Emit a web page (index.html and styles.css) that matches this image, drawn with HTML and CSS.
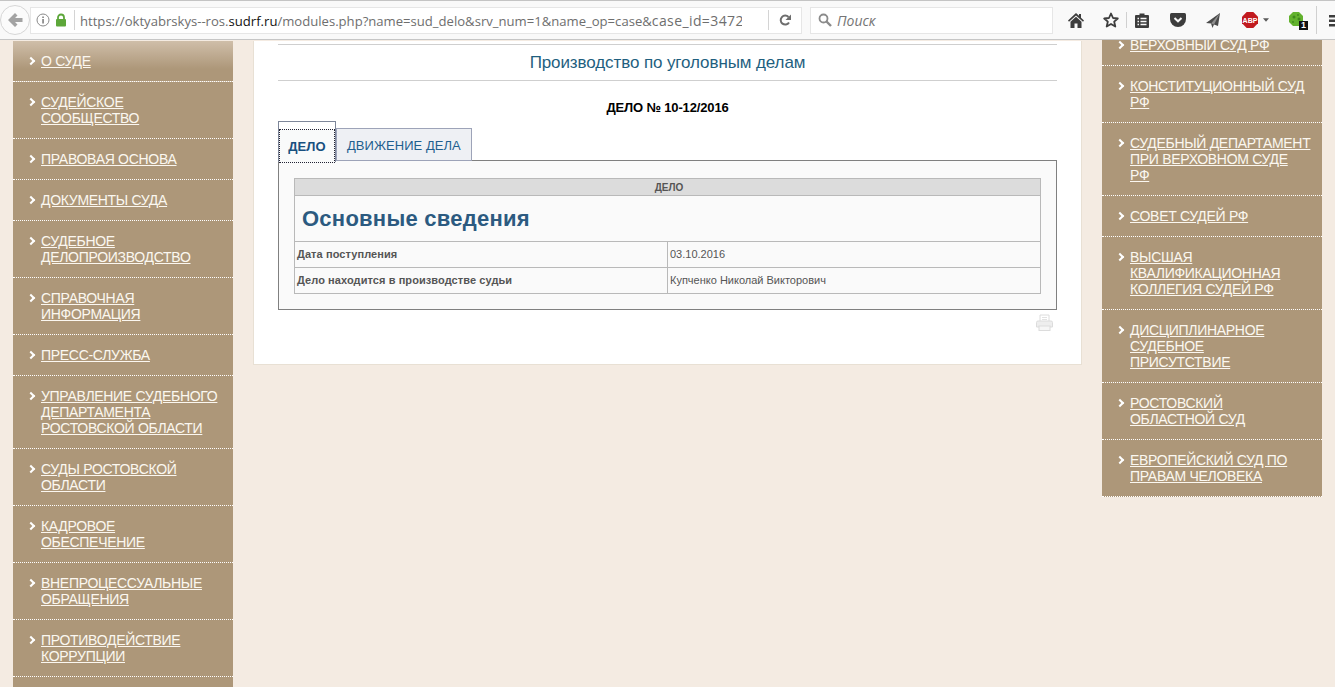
FILE: index.html
```html
<!DOCTYPE html>
<html>
<head>
    <meta charset="utf-8">
    <title>Производство по уголовным делам</title>
    <link rel="stylesheet" href="styles.css">
</head>
<body>
    <div class="toolbar">
        <div class="backBtn">
            <svg width="16" height="16" viewBox="0 0 16 16"><path d="M8 1 1 8 8 15 10.500 12.500 8 10H15.500V6H8L10.500 3.500Z" fill="#a3a3a3"/></svg>
        </div>
        <div class="urlBar">
            <svg class="infoIcon" width="14" height="14" viewBox="0 0 14 14"><circle cx="7" cy="7" r="6" fill="none" stroke="#8a8a8a" stroke-width="1"/><rect x="6.300" y="6" width="1.500" height="4.500" fill="#777"/><rect x="6.300" y="3.500" width="1.500" height="1.500" fill="#777"/></svg>
            <svg class="lockIcon" width="12" height="14" viewBox="0 0 12 14"><path d="M3 6V4.500a3 3 0 0 1 6 0V6" fill="none" stroke="#5da73a" stroke-width="1.800"/><rect x="1" y="6" width="10" height="7.500" rx="1" fill="#5da73a"/></svg>
            <span class="urlSep"></span>
            <div class="url">https://oktyabrskys--ros.<b>sudrf.ru</b>/modules.php?name=sud_delo&amp;srv_num=1&amp;name_op=case&amp;<span class="urlEnd">case_id=3472</span></div>
            <span class="urlSep reloadSep"></span>
            <svg class="reloadIcon" width="14" height="14" viewBox="0 0 14 14"><path d="M11 9.500A4.500 4.500 0 1 1 10.500 4" fill="none" stroke="#6d6d6d" stroke-width="2"/><path d="M13 1.500V7H7.500Z" fill="#6d6d6d"/></svg>
        </div>
        <div class="searchBar">
            <svg width="14" height="14" viewBox="0 0 14 14"><circle cx="5.500" cy="5.500" r="4" fill="none" stroke="#8b8b8b" stroke-width="1.800"/><path d="M8.500 8.500 13 13" stroke="#8b8b8b" stroke-width="2.400"/></svg>
            <span>Поиск</span>
        </div>
        <div class="tools">
            <svg class="homeIcon" width="16" height="15" viewBox="0 0 16 15"><path d="M8 0 0 7.500 1 8.700 8 2.400 15 8.700 16 7.500 13 4.700V1H11V2.800ZM8 3.800 2.500 8.800V15H6.500V10.500H9.500V15H13.500V8.800Z" fill="#3d3d3d"/></svg>
            <svg class="starIcon" width="16" height="16" viewBox="0 0 16 16"><path d="M8 1.500 10 6 14.800 6.500 11.200 9.700 12.300 14.500 8 12 3.700 14.500 4.800 9.700 1.200 6.500 6 6Z" fill="none" stroke="#3d3d3d" stroke-width="1.800" stroke-linejoin="round"/></svg>
            <span class="toolSep"></span>
            <svg class="listIcon" width="14" height="16" viewBox="0 0 14 16"><path d="M1 3H4.500V1.500H9.500V3H13Q14 3 14 4V15Q14 16 13 16H1Q0 16 0 15V4Q0 3 1 3Z" fill="#3d3d3d"/><path d="M2.500 6.500H4M5.500 6.500H11.500M2.500 9.500H4M5.500 9.500H11.500M2.500 12.500H4M5.500 12.500H11.500" stroke="#f9f9f9" stroke-width="1.300"/></svg>
            <svg class="pocketIcon" width="16" height="14" viewBox="0 0 16 14"><path d="M1.500 0H14.500Q16 0 16 1.500V6A8 8 0 0 1 0 6V1.500Q0 0 1.500 0Z" fill="#3d3d3d"/><path d="M4.500 5 8 8.300 11.500 5" fill="none" stroke="#f9f9f9" stroke-width="2"/></svg>
            <svg class="planeIcon" width="14" height="15" viewBox="0 0 14 15"><path d="M14 0 0 10 5 10.500 6.500 15 8 11.500 12 13Z" fill="#4a4a4a"/><path d="M14 0 5 10.500 8 11.500Z" fill="#8f8f8f"/></svg>
            <svg class="abpIcon" width="16" height="16" viewBox="0 0 16 16"><path d="M4.700 0H11.300L16 4.700V11.300L11.300 16H4.700L0 11.300V4.700Z" fill="#c11a1f"/><text x="8" y="10.500" text-anchor="middle" class="abpText">ABP</text></svg>
            <svg class="caretIcon" width="6" height="4" viewBox="0 0 7 4"><path d="M0 0H7L3.500 4Z" fill="#5a5a5a"/></svg>
            <div class="ext">
                <svg width="14" height="16" viewBox="0 0 14 16"><path d="M4 1H10L14 5V11L10 15H4L0 11V5Z" fill="#63b22e"/><circle cx="5" cy="6" r="1.500" fill="#3f8a1c"/><circle cx="9" cy="4" r="1" fill="#3f8a1c"/><circle cx="10" cy="8" r="1.500" fill="#3f8a1c"/><circle cx="4" cy="11" r="1" fill="#3f8a1c"/></svg>
                <span class="extBadge">1</span>
            </div>
            <span class="toolSep lastSep"></span>
            <svg class="menuIcon" width="13" height="13" viewBox="0 0 13 13"><path d="M0 1H13V3.500H0ZM0 5.500H13V8H0ZM0 10H13V12.500H0Z" fill="#3d3d3d"/></svg>
        </div>
    </div>

    <div class="page">
        <ul class="sideMenu leftMenu">
            <li class="first"><a href="#">О СУДЕ</a></li>
            <li><a href="#">СУДЕЙСКОЕ СООБЩЕСТВО</a></li>
            <li><a href="#">ПРАВОВАЯ ОСНОВА</a></li>
            <li><a href="#">ДОКУМЕНТЫ СУДА</a></li>
            <li><a href="#">СУДЕБНОЕ ДЕЛОПРОИЗВОДСТВО</a></li>
            <li><a href="#">СПРАВОЧНАЯ ИНФОРМАЦИЯ</a></li>
            <li><a href="#">ПРЕСС-СЛУЖБА</a></li>
            <li><a href="#">УПРАВЛЕНИЕ СУДЕБНОГО ДЕПАРТАМЕНТА РОСТОВСКОЙ ОБЛАСТИ</a></li>
            <li><a href="#">СУДЫ РОСТОВСКОЙ ОБЛАСТИ</a></li>
            <li><a href="#">КАДРОВОЕ<br>ОБЕСПЕЧЕНИЕ</a></li>
            <li><a href="#">ВНЕПРОЦЕССУАЛЬНЫЕ ОБРАЩЕНИЯ</a></li>
            <li><a href="#">ПРОТИВОДЕЙСТВИЕ КОРРУПЦИИ</a></li>
            <li class="empty"></li>
        </ul>

        <div class="card">
            <h2 class="caseTitle">Производство по уголовным делам</h2>
            <h3 class="caseNum">ДЕЛО № 10-12/2016</h3>

            <div class="tabs">
                <div class="tab active"><a href="#">ДЕЛО</a></div>
                <div class="tab"><a href="#">ДВИЖЕНИЕ ДЕЛА</a></div>
            </div>
            <div class="panel">
                <table class="caseTable">
                    <tr><th colspan="2" class="tableHead">ДЕЛО</th></tr>
                    <tr><td colspan="2" class="bigCell">Основные сведения</td></tr>
                    <tr>
                        <td class="label">Дата поступления</td>
                        <td class="value">03.10.2016</td>
                    </tr>
                    <tr>
                        <td class="label">Дело находится в производстве судьи</td>
                        <td class="value">Купченко Николай Викторович</td>
                    </tr>
                </table>
            </div>
            <div class="printRow">
                <svg width="17" height="17" viewBox="0 0 17 17"><path d="M4 7V1H13V7" fill="#fff" stroke="#dcdcdc"/><path d="M6 3.500H11M6 5.500H11" stroke="#e2e2e2"/><path d="M2 7H15Q16.500 7 16.500 8.500V13H.5V8.500Q.5 7 2 7Z" fill="#eeeeee" stroke="#dcdcdc"/><rect x="3" y="12" width="11" height="4.500" fill="#f6f6f6" stroke="#dcdcdc"/></svg>
            </div>
        </div>

        <ul class="sideMenu rightMenu">
            <li><a href="#">ВЕРХОВНЫЙ СУД РФ</a></li>
            <li><a href="#">КОНСТИТУЦИОННЫЙ СУД РФ</a></li>
            <li><a href="#">СУДЕБНЫЙ ДЕПАРТАМЕНТ<br>ПРИ ВЕРХОВНОМ СУДЕ<br>РФ</a></li>
            <li><a href="#">СОВЕТ СУДЕЙ РФ</a></li>
            <li><a href="#">ВЫСШАЯ КВАЛИФИКАЦИОННАЯ КОЛЛЕГИЯ СУДЕЙ РФ</a></li>
            <li><a href="#">ДИСЦИПЛИНАРНОЕ<br>СУДЕБНОЕ<br>ПРИСУТСТВИЕ</a></li>
            <li><a href="#">РОСТОВСКИЙ ОБЛАСТНОЙ СУД</a></li>
            <li><a href="#">ЕВРОПЕЙСКИЙ СУД ПО ПРАВАМ ЧЕЛОВЕКА</a></li>
        </ul>
    </div>
</body>
</html>
```

FILE: styles.css
```css
html, body {
    margin: 0;
    height: 100%;
    overflow: hidden;
}
body {
    background-color: #f4ebe2;
    font-family: "Liberation Sans", Arial, sans-serif;
}

/* browser bar */
.toolbar {
    height: 40px;
    box-sizing: border-box;
    display: flex;
    align-items: center;
    background-color: #f9f9f9;
    border-top: 1px solid #c4c4c4;
    border-bottom: 1px solid #c6c6c6;
    overflow: hidden;
}
.backBtn {
    width: 30px;
    height: 30px;
    box-sizing: border-box;
    border: 1px solid #d6d6d6;
    border-radius: 50%;
    background-color: #fbfbfb;
    display: flex;
    align-items: center;
    justify-content: center;
    flex: none;
}
.urlBar {
    width: 772px;
    height: 27px;
    box-sizing: border-box;
    display: flex;
    align-items: center;
    flex: none;
    background-color: #fff;
    border: 1px solid #e6e6e6;
    padding-left: 3px;
}
.infoIcon {
    margin-left: 2px;
    flex: none;
}
.lockIcon {
    margin-left: 5px;
    flex: none;
}
.urlSep {
    width: 1px;
    height: 20px;
    background-color: #d4d4d4;
    margin-left: 7px;
    flex: none;
}
.url {
    width: 662px;
    margin-left: 5px;
    overflow: hidden;
    white-space: nowrap;
    flex: none;
    font-family: "Open Sans", sans-serif;
    font-size: 13.100px;
    color: #6e6e6e;
}
.url b {
    font-weight: 400;
    color: #111;
}
.urlEnd {
    font-size: 14px;
    letter-spacing: 0.4px;
}
.reloadSep {
    margin-left: 26px;
}
.reloadIcon {
    margin-left: 9px;
    flex: none;
}
.searchBar {
    width: 243px;
    height: 27px;
    margin-left: 8px;
    box-sizing: border-box;
    display: flex;
    align-items: center;
    flex: none;
    background-color: #fff;
    border: 1px solid #e6e6e6;
    padding-left: 7px;
    font-family: "Open Sans", sans-serif;
    font-style: italic;
    font-size: 14px;
    color: #757575;
}
.searchBar span {
    margin-left: 5px;
}
.tools {
    display: flex;
    align-items: center;
    flex: none;
    margin-left: 15px;
}
.starIcon { margin-left: 19px; }
.toolSep {
    width: 1px;
    height: 16px;
    background-color: #d0d0d0;
    margin-left: 7px;
}
.listIcon { margin-left: 8px; }
.pocketIcon { margin-left: 21px; }
.planeIcon { margin-left: 20px; }
.abpIcon { margin-left: 22px; }
.abpText {
    font-size: 7px;
    font-weight: 700;
    fill: #fff;
}
.caretIcon { margin-left: 5px; }
.ext {
    display: flex;
    width: 18px;
    height: 18px;
    margin-left: 20px;
    position: relative;
}
.extBadge {
    position: absolute;
    right: -1px;
    bottom: -1px;
    width: 9px;
    height: 9px;
    background-color: #111;
    color: #fff;
    font-size: 9px;
    font-weight: 700;
    line-height: 9px;
    text-align: center;
}
.lastSep {
    height: 28px;
    margin-left: 9px;
}
.menuIcon { margin-left: 12px; }

/* page */
.page {
    display: flex;
    align-items: flex-start;
    padding-left: 13px;
    padding-top: 1px;
    height: 646px;
    overflow: hidden;
}
.sideMenu {
    width: 220px;
    flex: none;
    margin: 0;
    padding: 0;
    list-style: none;
    background-color: #ad9779;
}
.rightMenu {
    margin-top: -16px;
    margin-left: 20px;
}
.sideMenu li {
    display: flex;
    align-items: flex-start;
    padding: 12px 11px 12px 16px;
    border-bottom: 1px dotted #fff;
    font-size: 14px;
    line-height: 16px;
    letter-spacing: -0.3px;
}
.sideMenu li::before {
    content: "";
    flex: none;
    width: 6px;
    height: 6px;
    box-sizing: border-box;
    border-top: 2px solid #fff;
    border-right: 2px solid #fff;
    transform: rotate(45deg);
    margin: 5px 7px 0 -1px;
}
.sideMenu li.empty::before {
    display: none;
}
.sideMenu li.empty {
    height: 16px;
    border-bottom: 0;
}
.sideMenu li.first {
    background: linear-gradient(#cfbea9, #ad9779 70%);
}
.sideMenu a {
    color: #fbf7f0;
    text-decoration: underline;
}

.card {
    width: 829px;
    height: 324px;
    flex: none;
    margin-left: 20px;
    box-sizing: border-box;
    background-color: #fff;
    border: 1px solid #e8e0d4;
    border-top: 0;
    padding: 3px 24px 0 24px;
}
.caseTitle {
    margin: 0;
    height: 37px;
    box-sizing: border-box;
    border-top: 1px solid #cfcfcf;
    border-bottom: 1px solid #cfcfcf;
    font-size: 17px;
    letter-spacing: -0.1px;
    font-weight: 400;
    line-height: 35px;
    text-align: center;
    color: #1f5f7f;
}
.caseNum {
    margin: 19px 0 0;
    font-size: 13px;
    letter-spacing: -0.15px;
    line-height: 16px;
    text-align: center;
    color: #000;
}
.tabs {
    display: flex;
    align-items: flex-start;
    margin-top: 5px;
    position: relative;
    margin-bottom: -2px;
}
.tab {
    margin-top: 7px;
    height: 33px;
    box-sizing: border-box;
    padding: 0 10px;
    border: 1px solid #9da3b8;
    background-color: #eef0f4;
    font-size: 13px;
    letter-spacing: 0.05px;
    line-height: 33px;
}
.tab a {
    color: #1f5f8f;
    text-decoration: none;
}
.tab.active {
    margin-top: 0;
    height: 41px;
    width: 58px;
    padding: 7px 0 0;
    border-color: #7d8699;
    border-bottom: 0;
    background-color: #fff;
}
.tab.active a {
    display: block;
    height: 34px;
    box-sizing: border-box;
    border: 1px dotted #223;
    background-color: #f9fafa;
    color: #18507f;
    font-size: 13px;
    font-weight: 700;
    line-height: 34px;
    text-align: center;
}
.panel {
    height: 150px;
    box-sizing: border-box;
    border: 1px solid #808080;
    background-color: #fafafa;
    padding: 17px 15px 0;
}
.caseTable {
    width: 747px;
    border-collapse: collapse;
    color: #555;
    font-size: 11px;
}
.caseTable th,
.caseTable td {
    border: 1px solid #b9b9b9;
    padding: 0 2px 2px;
}
.caseTable .tableHead {
    height: 16px;
    padding: 2px 0 0 3px;
    box-sizing: border-box;
    background-color: #dcdcdc;
    font-size: 10px;
    text-align: center;
    line-height: 14px;
}
.caseTable .bigCell {
    height: 46px;
    padding: 0 0 0 7px;
    box-sizing: border-box;
    font-size: 22px;
    letter-spacing: 0.25px;
    font-weight: 700;
    color: #2c5a80;
}
.label {
    height: 23px;
    width: 368px;
    font-size: 11px;
    letter-spacing: 0.08px;
    font-weight: 700;
}
.value {
    font-size: 11px;
}
.printRow {
    display: flex;
    justify-content: flex-end;
    padding: 4px 4px 0 0;
}
```
